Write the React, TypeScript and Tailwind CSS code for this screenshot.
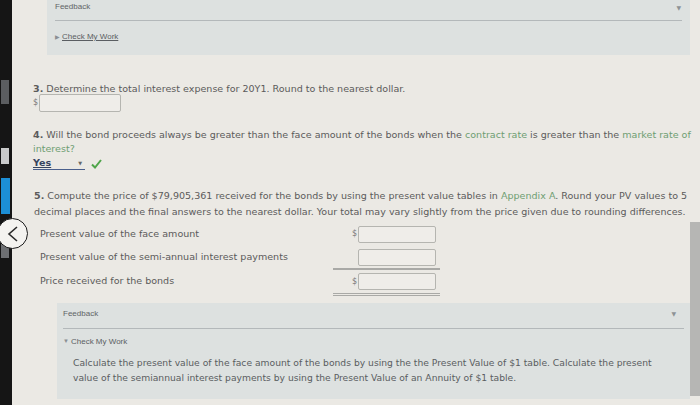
import React from 'react';

const green = 'text-[#6e9e72]';

const Field = ({ dollar, wide }: { dollar?: boolean; wide?: boolean }) => (
  <div className="flex items-center">
    <span className="w-[6px] text-[8px] text-[#777]">{dollar ? '$' : ''}</span>
    <div className={`${wide ? 'w-[82px] h-[18px]' : 'w-[78px] h-[17px]'} border border-[#b5b5b0] rounded-[2px] bg-[#efede9]`} />
  </div>
);

const CheckMyWork = ({ open }: { open?: boolean }) => (
  <div className="flex items-center gap-[2px] font-['Liberation_Sans',sans-serif] text-[8px] text-[#5a5e62]">
    <span className="text-[6px] text-[#8a8f93]">{open ? '▼' : '▶'}</span>
    <span className={open ? '' : 'underline'}>Check My Work</span>
  </div>
);

export default function App() {
  return (
    <div className="relative w-[700px] h-[405px] flex overflow-hidden bg-[#ebe9e4] font-['DejaVu_Sans',sans-serif] text-[#5b5b5b]">
      {/* dark bezel on the left */}
      <div className="w-[12px] shrink-0 flex flex-col bg-[#151515]">
        <div className="h-[80px]" />
        <div className="h-[24px] ml-[1px] w-[8px] bg-[#5b5d60]" />
        <div className="h-[44px]" />
        <div className="h-[16px] ml-[1px] w-[8px] bg-[#c9cacb]" />
        <div className="h-[14px]" />
        <div className="h-[36px] ml-[1px] w-[9px] bg-[#1c8fd6]" />
        <div className="h-[28px]" />
        <div className="h-[16px] ml-[1px] w-[8px] bg-[#6d6f72]" />
        <div className="flex-1" />
      </div>

      {/* back arrow overlay */}
      <div className="absolute left-[-3px] top-[218px] w-[31px] h-[31px] rounded-full border-[1.5px] border-[#1c1c1c] bg-[#f4f3f0] flex items-center justify-center">
        <svg width="12" height="16" viewBox="0 0 12 16" fill="none">
          <path d="M10 1 L2 8 L10 15" stroke="#2a2a2a" strokeWidth="1.6" />
        </svg>
      </div>

      <div className="flex-1 flex flex-col">
        {/* top feedback panel */}
        <div className="ml-[35px] mr-[10px] h-[55px] bg-[#dde1e0] px-[8px] flex flex-col">
          <div className="flex items-center justify-between h-[14px]">
            <span className="font-['Liberation_Sans',sans-serif] text-[8px] text-[#5f6366]">Feedback</span>
            <span className="text-[6px] text-[#8d9296] mr-[1px]">▼</span>
          </div>
          <div className="mt-[6px] h-px bg-[#b3b8ba]" />
          <div className="mt-[10px]">
            <CheckMyWork />
          </div>
        </div>

        {/* question 3 */}
        <div className="pl-[21px] mt-[28px] text-[9.55px] leading-[12px] whitespace-nowrap">
          <span className="font-bold">3.</span> Determine the total interest expense for 20Y1. Round to the nearest dollar.
        </div>
        <div className="pl-[21px] mt-[-1px]">
          <Field dollar wide />
        </div>

        {/* question 4 */}
        <div className="pl-[21px] mt-[16px] text-[9.55px] leading-[14px] whitespace-nowrap">
          <div>
            <span className="font-bold">4.</span> Will the bond proceeds always be greater than the face amount of the bonds when the{' '}
            <span className={green}>contract rate</span> is greater than the <span className={green}>market rate of</span>
          </div>
          <div className={green}>interest?</div>
        </div>
        <div className="pl-[21px] mt-[1px] flex items-center gap-[6px]">
          <div className="w-[52px] flex items-center justify-between border-b-[1.5px] border-[#4a5f8c] text-[9.55px] leading-[12px] font-bold text-[#37445e]">
            <span className="underline">Yes</span>
            <span className="text-[5px] text-[#666] mr-[3px]">▼</span>
          </div>
          <svg width="11" height="10" viewBox="0 0 11 10">
            <path d="M1 5.5 L4 8.5 L10 1" stroke="#4fa54a" strokeWidth="2" fill="none" />
          </svg>
        </div>

        {/* question 5 */}
        <div className="pl-[22px] mt-[18px] text-[9.55px] leading-[16px] whitespace-nowrap">
          <div>
            <span className="font-bold">5.</span> Compute the price of $79,905,361 received for the bonds by using the present value tables in{' '}
            <span className={green}>Appendix A</span>. Round your PV values to 5
          </div>
          <div>decimal places and the final answers to the nearest dollar. Your total may vary slightly from the price given due to rounding differences.</div>
        </div>

        <div className="pl-[28px] mt-[3px] w-[424px] flex flex-col text-[9.55px]">
          <div className="flex items-center justify-between h-[22px]">
            <span>Present value of the face amount</span>
            <Field dollar />
          </div>
          <div className="flex items-center justify-between h-[22px] mt-[1px]">
            <span>Present value of the semi-annual interest payments</span>
            <Field />
          </div>
          <div className="ml-[293px] mr-[-4px] h-[1.5px] bg-[#a9a9a6]" />
          <div className="flex items-center justify-between h-[22px] mt-[1px]">
            <span>Price received for the bonds</span>
            <Field dollar />
          </div>
          <div className="ml-[293px] mr-[-4px] h-[3px] border-y border-[#a9a9a6]" />
        </div>

        {/* bottom feedback panel */}
        <div className="ml-[45px] mr-[10px] mt-[7px] h-[96px] bg-[#dde1e0] px-[6px] flex flex-col">
          <div className="flex items-center justify-between h-[22px]">
            <span className="font-['Liberation_Sans',sans-serif] text-[8px] text-[#5f6366]">Feedback</span>
            <span className="text-[6px] text-[#8d9296] mr-[8px]">▼</span>
          </div>
          <div className="mt-[3px] h-px bg-[#b3b8ba]" />
          <div className="mt-[7px]">
            <CheckMyWork open />
          </div>
          <div className="pl-[10px] mt-[7px] text-[9.2px] leading-[15px] whitespace-nowrap text-[#5a5d60]">
            <div>
              Calculate the present value of the face amount of the bonds by using the the Present Value of $1 table. Calculate the present
            </div>
            <div>value of the semiannual interest payments by using the Present Value of an Annuity of $1 table.</div>
          </div>
        </div>
      </div>

      {/* scrollbar */}
      <div className="absolute right-0 top-[222px] w-[10px] h-[174px] bg-[#b6b6b4]" />
    </div>
  );
}
